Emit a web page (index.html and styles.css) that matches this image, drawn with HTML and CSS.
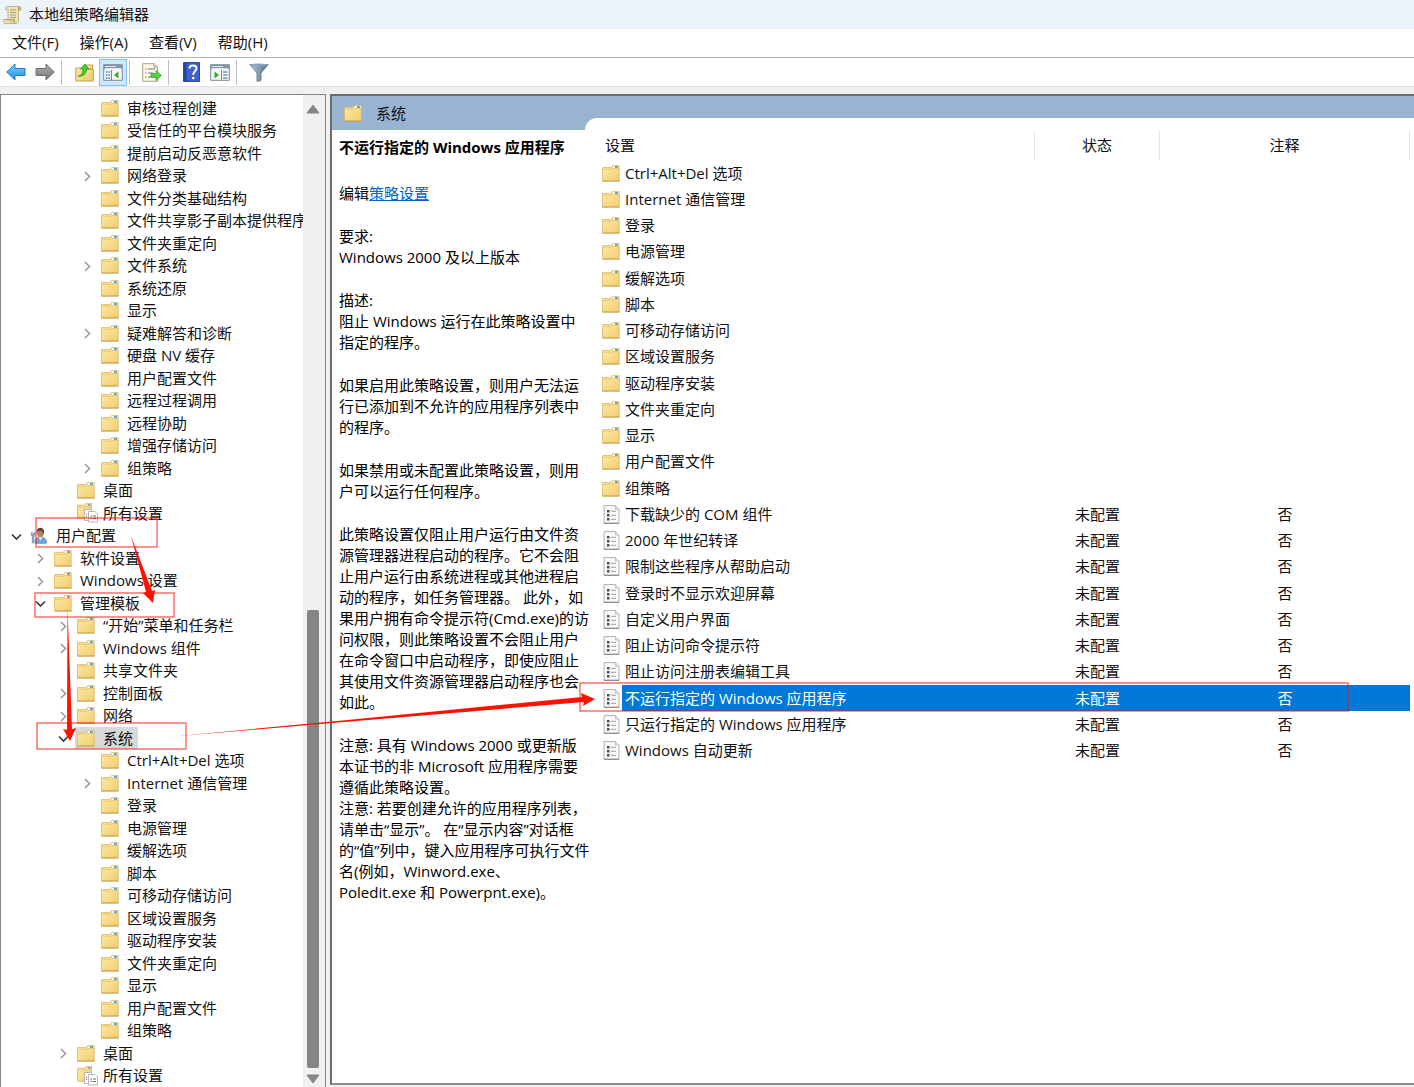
FILE: index.html
```html
<!DOCTYPE html>
<html lang="zh-CN">
<head>
  <meta charset="UTF-8">
  <meta name="viewport" content="width=device-width, initial-scale=1.0">
  <title>本地组策略编辑器</title>
  <link rel="stylesheet" href="styles.css">
</head>
<body>
  <!-- Shared icons -->
  <svg class="sprite" width="0" height="0" aria-hidden="true">
    <defs>
      <linearGradient id="paper" x1="0" y1="0" x2="1" y2="1">
        <stop offset="0" stop-color="#ffebab"/>
        <stop offset="1" stop-color="#f1cc6c"/>
      </linearGradient>
      <linearGradient id="blue" x1="0" y1="0" x2="0" y2="1">
        <stop offset="0" stop-color="#7bd0fa"/>
        <stop offset="1" stop-color="#1590e0"/>
      </linearGradient>
      <linearGradient id="grey" x1="0" y1="0" x2="0" y2="1">
        <stop offset="0" stop-color="#b5b5b5"/>
        <stop offset="1" stop-color="#707070"/>
      </linearGradient>
      <linearGradient id="steel" x1="0" y1="0" x2="1" y2="0">
        <stop offset="0" stop-color="#b9d0e2"/>
        <stop offset="1" stop-color="#4d6a82"/>
      </linearGradient>
    </defs>
    <symbol id="folder" viewBox="0 0 18 17">
      <path d="M.5 2.500h8.300L10.500.600h6.700V15.900H.5z" fill="url(#paper)" stroke="#dbb765" stroke-width=".8"/>
      <path d="M11 1h5.500v2H11z" fill="#fff8e0"/>
      <path d="M13 1h3v2h-3z" fill="#5aa9e2"/>
      <path d="M1 4.300h8l1.500-.8h6.500" fill="none" stroke="#e0bd6c" stroke-width=".7"/>
      <path d="M.3 16.100h17.400" stroke="#c39b4c" stroke-width=".9"/>
    </symbol>
    <symbol id="allset" viewBox="0 0 22 20">
      <path d="M.5 2.200h6.500L8.800.500h5.700v14.700H.5z" fill="url(#paper)" stroke="#dbb765" stroke-width=".8"/>
      <path d="M11 1.200h2.500v1.500H11z" fill="#5aa9e2"/>
      <path d="M1 4h13" stroke="#e0bd6c" stroke-width=".7"/>
      <path d="M7.500 6.500h6l2 2v9h-8z" fill="#fff" stroke="#a5a5a5" stroke-width=".8"/>
      <path d="M11.500 8.500h6.500l2.500 2.500v8h-9z" fill="#fff" stroke="#a5a5a5" stroke-width=".8"/>
      <path d="M9 11h1M9 13.500h1M13.500 13h1.500M16 13h3M13.500 15.500h1.500M16 15.500h3" stroke="#666"/>
    </symbol>
    <symbol id="policy" viewBox="0 0 17 19">
      <path d="M1 .600h11.500l3.500 3.500v14.300H1z" fill="#fafafa" stroke="#b0b0b0"/>
      <path d="M12.500.600v3.500H16" fill="#e3e3e3" stroke="#b8b8b8" stroke-width=".8"/>
      <path d="M1 18.300h15" stroke="#8a8a8a" stroke-width="1.200"/>
      <path d="M4 5h2.500v2.400H4zM4 9h2.500v2.400H4zM4 13h2.500v2.400H4z" fill="#4c4c54"/>
      <path d="M8 6.300h5M8 10.300h5M8 14.300h5" stroke="#9a9ab4"/>
    </symbol>
    <symbol id="closed" viewBox="0 0 16 16">
      <path d="m6 4 4.500 4.500L6 13" fill="none" stroke="#999" stroke-width="1.500"/>
    </symbol>
    <symbol id="open" viewBox="0 0 16 16">
      <path d="m4 6.500 4.500 4.500L13 6.500" fill="none" stroke="#3a3a3a" stroke-width="1.700"/>
    </symbol>
    <symbol id="user" viewBox="0 0 18 18">
      <path d="M1 5.500 3 7l2-1.500v3L3.800 10v7H1.800v-7L.5 8.500z" fill="#8aa4bf" stroke="#6d8aa8" stroke-width=".5"/>
      <path d="M5 17.300c-.6-4.500 1.500-6.600 5.500-6.600 4.600 0 6.600 2.600 6.800 6.300-3.500 1-8.500 1-12.300.3z" fill="#6ea6dc" stroke="#4c82b8" stroke-width=".6"/>
      <path d="m8.500 10.800 2 3.500 2-3.500z" fill="#f3f7fb"/>
      <ellipse cx="10.400" cy="6.200" rx="3.600" ry="4.700" fill="#b68358"/>
      <path d="M6.500 5.500C5.800-.6 15-.8 14.400 5.700L13.300 8c0-2.600-1-3.900-3.300-4-1.600 0-2.500.5-3.500 1.500z" fill="#4e4540"/>
    </symbol>
  </svg>

  <header class="titlebar">
    <svg width="20" height="20" viewBox="0 0 20 20" aria-hidden="true">
      <path d="M5.500 1.500c-2 0-2.500 1.500-1.500 3h2v10H2c-1.500 2-.5 4 1 4h11c2 0 2.500-1.500 2.500-3V5h2c1-2 .2-3.500-1.500-3.500z" fill="#efe2b4" stroke="#b5a67c" stroke-width=".8"/>
      <path d="M16.500 5V3c0-1.500 2-1.500 2 .3L18 5zM2 14.500h10.500c-.5 2 0 4 1.500 4" fill="#d5c28c" stroke="#a5946a" stroke-width=".8"/>
      <path d="M8 5h6M8 7.500h6M8 10h6M8 12.500h6" stroke="#a79f86"/>
    </svg>
    <span>本地组策略编辑器</span>
  </header>

  <nav class="menubar">
    <button type="button">文件(F)</button>
    <button type="button">操作(A)</button>
    <button type="button">查看(V)</button>
    <button type="button">帮助(H)</button>
  </nav>

  <div class="toolbar">
    <button type="button" aria-label="后退">
      <svg width="20" height="18" viewBox="0 0 20 18"><path d="M.7 9 9 1v4.500h10v7H9V17z" fill="url(#blue)" stroke="#2b7db8"/></svg>
    </button>
    <button type="button" aria-label="前进">
      <svg width="20" height="18" viewBox="0 0 20 18"><path d="M19.300 9 11 1v4.500H1v7h10V17z" fill="url(#grey)" stroke="#6f6f6f"/></svg>
    </button>
    <span class="sep"></span>
    <button type="button" aria-label="向上">
      <svg width="19" height="19" viewBox="0 0 19 19">
        <path d="M10 4 11.500 2h6v4H10zM.8 5h9l1 1.500h7.500V18H.8z" fill="url(#paper)" stroke="#c9a04c"/>
        <path d="M3 13c4-1 5-4 5-7H5.500l4.500-5 4 5h-2.500c0 5-3 8-8.500 7z" fill="#48cc30" stroke="#24931c" stroke-width=".7"/>
      </svg>
    </button>
    <button type="button" class="pressed" aria-label="显示/隐藏控制台树">
      <svg width="20" height="17" viewBox="0 0 20 17">
        <path d="M.7.700h18.600v15.600H.7z" fill="#f7f7f7" stroke="#79879a"/>
        <path d="M1 1h18v4H1z" fill="#8494a8"/><path d="M2 2.500h11M2 4.500h16" stroke="#dfe6ef"/>
        <path d="M8.500 6v10" stroke="#79879a"/>
        <path d="M3 8h1.500M3 11h1.500M3 14h1.500M5.500 8H7M5.500 11H7M5.500 14H7" stroke="#477ab8" stroke-width="1.300"/>
        <path d="M15.500 7.500v7L11 11z" fill="#36ad24"/>
      </svg>
    </button>
    <span class="sep"></span>
    <button type="button" aria-label="导出列表">
      <svg width="20" height="19" viewBox="0 0 20 19">
        <path d="M.7.700H12L15.500 4v14.300H.7z" fill="#fdf9e5" stroke="#a7a18b"/>
        <path d="M12 .700V4h3.500" fill="#e0dcc7" stroke="#a7a18b"/>
        <path d="M3 6h1.500M3 10h1.500M3 14h1.500M6 6h7M6 10h5M6 14h5" stroke="#77758a"/>
        <path d="M9 10.500h5V7.500l5.500 5-5.500 5v-3H9z" fill="#56cd45" stroke="#35a52c" stroke-width=".7"/>
      </svg>
    </button>
    <span class="sep"></span>
    <button type="button" aria-label="帮助">
      <svg width="17" height="20" viewBox="0 0 17 20">
        <path d="M.6.600h15.800v18.800H.6z" fill="#3f62cf" stroke="#253b91"/><path d="M1 1h2.500v18H1z" fill="#2744a0"/>
        <path d="M6.500 6.500c0-4 7-4 7 0 0 2.500-3.300 3-3.300 6.500" fill="none" stroke="#fff" stroke-width="2"/>
        <circle cx="10.200" cy="16" r="1.300" fill="#fff"/>
      </svg>
    </button>
    <button type="button" aria-label="显示/隐藏操作窗格">
      <svg width="20" height="17" viewBox="0 0 20 17">
        <path d="M.7.700h18.600v15.600H.7z" fill="#f7f7f7" stroke="#79879a"/>
        <path d="M1 1h18v4H1z" fill="#8494a8"/><path d="M2 2.500h11M2 4.500h16" stroke="#dfe6ef"/>
        <path d="M11.500 6v10" stroke="#79879a"/>
        <path d="M13 8h4.500M13 11h4.500M13 14h4.500" stroke="#7894b5" stroke-width="1.300"/>
        <path d="M4.500 7.500v7L9 11z" fill="#36ad24"/>
      </svg>
    </button>
    <span class="sep"></span>
    <button type="button" aria-label="筛选器">
      <svg width="20" height="19" viewBox="0 0 20 19">
        <path d="M.8 1.500h18.400L12 10v7.500l-4 1V10z" fill="url(#steel)" stroke="#5b7183" stroke-width=".8"/>
        <ellipse cx="10" cy="2" rx="9" ry="1.500" fill="#8ba4b7"/>
      </svg>
    </button>
  </div>

  <main class="workspace">
    <aside class="tree-pane">
      <ul class="tree">
        <li class="l3"><span><svg><use href="#folder"/></svg>审核过程创建</span></li>
        <li class="l3"><span><svg><use href="#folder"/></svg>受信任的平台模块服务</span></li>
        <li class="l3"><span><svg><use href="#folder"/></svg>提前启动反恶意软件</span></li>
        <li class="l3"><svg class="arrow"><use href="#closed"/></svg><span><svg><use href="#folder"/></svg>网络登录</span></li>
        <li class="l3"><span><svg><use href="#folder"/></svg>文件分类基础结构</span></li>
        <li class="l3"><span><svg><use href="#folder"/></svg>文件共享影子副本提供程序</span></li>
        <li class="l3"><span><svg><use href="#folder"/></svg>文件夹重定向</span></li>
        <li class="l3"><svg class="arrow"><use href="#closed"/></svg><span><svg><use href="#folder"/></svg>文件系统</span></li>
        <li class="l3"><span><svg><use href="#folder"/></svg>系统还原</span></li>
        <li class="l3"><span><svg><use href="#folder"/></svg>显示</span></li>
        <li class="l3"><svg class="arrow"><use href="#closed"/></svg><span><svg><use href="#folder"/></svg>疑难解答和诊断</span></li>
        <li class="l3"><span><svg><use href="#folder"/></svg>硬盘 NV 缓存</span></li>
        <li class="l3"><span><svg><use href="#folder"/></svg>用户配置文件</span></li>
        <li class="l3"><span><svg><use href="#folder"/></svg>远程过程调用</span></li>
        <li class="l3"><span><svg><use href="#folder"/></svg>远程协助</span></li>
        <li class="l3"><span><svg><use href="#folder"/></svg>增强存储访问</span></li>
        <li class="l3"><svg class="arrow"><use href="#closed"/></svg><span><svg><use href="#folder"/></svg>组策略</span></li>
        <li class="l2"><span><svg><use href="#folder"/></svg>桌面</span></li>
        <li class="l2"><span><svg class="wide"><use href="#allset"/></svg>所有设置</span></li>
        <li class="l0"><svg class="arrow"><use href="#open"/></svg><span><svg><use href="#user"/></svg>用户配置</span></li>
        <li class="l1"><svg class="arrow"><use href="#closed"/></svg><span><svg><use href="#folder"/></svg>软件设置</span></li>
        <li class="l1"><svg class="arrow"><use href="#closed"/></svg><span><svg><use href="#folder"/></svg>Windows 设置</span></li>
        <li class="l1"><svg class="arrow"><use href="#open"/></svg><span><svg><use href="#folder"/></svg>管理模板</span></li>
        <li class="l2"><svg class="arrow"><use href="#closed"/></svg><span><svg><use href="#folder"/></svg>“开始”菜单和任务栏</span></li>
        <li class="l2"><svg class="arrow"><use href="#closed"/></svg><span><svg><use href="#folder"/></svg>Windows 组件</span></li>
        <li class="l2"><span><svg><use href="#folder"/></svg>共享文件夹</span></li>
        <li class="l2"><svg class="arrow"><use href="#closed"/></svg><span><svg><use href="#folder"/></svg>控制面板</span></li>
        <li class="l2"><svg class="arrow"><use href="#closed"/></svg><span><svg><use href="#folder"/></svg>网络</span></li>
        <li class="l2"><svg class="arrow"><use href="#open"/></svg><span class="current"><svg><use href="#folder"/></svg>系统</span></li>
        <li class="l3"><span><svg><use href="#folder"/></svg>Ctrl+Alt+Del 选项</span></li>
        <li class="l3"><svg class="arrow"><use href="#closed"/></svg><span><svg><use href="#folder"/></svg>Internet 通信管理</span></li>
        <li class="l3"><span><svg><use href="#folder"/></svg>登录</span></li>
        <li class="l3"><span><svg><use href="#folder"/></svg>电源管理</span></li>
        <li class="l3"><span><svg><use href="#folder"/></svg>缓解选项</span></li>
        <li class="l3"><span><svg><use href="#folder"/></svg>脚本</span></li>
        <li class="l3"><span><svg><use href="#folder"/></svg>可移动存储访问</span></li>
        <li class="l3"><span><svg><use href="#folder"/></svg>区域设置服务</span></li>
        <li class="l3"><span><svg><use href="#folder"/></svg>驱动程序安装</span></li>
        <li class="l3"><span><svg><use href="#folder"/></svg>文件夹重定向</span></li>
        <li class="l3"><span><svg><use href="#folder"/></svg>显示</span></li>
        <li class="l3"><span><svg><use href="#folder"/></svg>用户配置文件</span></li>
        <li class="l3"><span><svg><use href="#folder"/></svg>组策略</span></li>
        <li class="l2"><svg class="arrow"><use href="#closed"/></svg><span><svg><use href="#folder"/></svg>桌面</span></li>
        <li class="l2"><span><svg class="wide"><use href="#allset"/></svg>所有设置</span></li>
      </ul>
      <div class="scrollbar">
        <svg width="14" height="10" viewBox="0 0 14 10"><path d="M7 1 13 9H1z" fill="#858585" stroke="#858585" stroke-linejoin="round"/></svg>
        <div class="track"><div class="thumb"></div></div>
        <svg width="14" height="10" viewBox="0 0 14 10"><path d="M7 9 13 1H1z" fill="#858585" stroke="#858585" stroke-linejoin="round"/></svg>
      </div>
    </aside>

    <section class="detail-pane">
      <div class="info">
        <h1><svg width="18" height="17"><use href="#folder"/></svg>系统</h1>
        <div class="description">
          <h2>不运行指定的 Windows 应用程序</h2>
          <p class="edit">编辑<a href="#">策略设置</a></p>
          <p>要求:<br>Windows 2000 及以上版本</p>
          <p>描述:<br>阻止 Windows 运行在此策略设置中<br>指定的程序。</p>
          <p>如果启用此策略设置，则用户无法运<br>行已添加到不允许的应用程序列表中<br>的程序。</p>
          <p>如果禁用或未配置此策略设置，则用<br>户可以运行任何程序。</p>
          <p>此策略设置仅阻止用户运行由文件资<br>源管理器进程启动的程序。它不会阻<br>止用户运行由系统进程或其他进程启<br>动的程序，如任务管理器。 此外，如<br>果用户拥有命令提示符(Cmd.exe)的访<br>问权限，则此策略设置不会阻止用户<br>在命令窗口中启动程序，即使应阻止<br>其使用文件资源管理器启动程序也会<br>如此。</p>
          <p>注意: 具有 Windows 2000 或更新版<br>本证书的非 Microsoft 应用程序需要<br>遵循此策略设置。<br>注意: 若要创建允许的应用程序列表，<br>请单击“显示”。 在“显示内容”对话框<br>的“值”列中，键入应用程序可执行文件<br>名(例如，Winword.exe、<br>Poledit.exe 和 Powerpnt.exe)。</p>
        </div>
      </div>

      <div class="list">
        <table>
          <colgroup><col class="c-icon"><col><col class="c-state"><col class="c-note"></colgroup>
          <thead>
            <tr><th colspan="2">设置</th><th>状态</th><th>注释</th></tr>
          </thead>
          <tbody>
            <tr><td><svg><use href="#folder"/></svg></td><td>Ctrl+Alt+Del 选项</td><td></td><td></td></tr>
            <tr><td><svg><use href="#folder"/></svg></td><td>Internet 通信管理</td><td></td><td></td></tr>
            <tr><td><svg><use href="#folder"/></svg></td><td>登录</td><td></td><td></td></tr>
            <tr><td><svg><use href="#folder"/></svg></td><td>电源管理</td><td></td><td></td></tr>
            <tr><td><svg><use href="#folder"/></svg></td><td>缓解选项</td><td></td><td></td></tr>
            <tr><td><svg><use href="#folder"/></svg></td><td>脚本</td><td></td><td></td></tr>
            <tr><td><svg><use href="#folder"/></svg></td><td>可移动存储访问</td><td></td><td></td></tr>
            <tr><td><svg><use href="#folder"/></svg></td><td>区域设置服务</td><td></td><td></td></tr>
            <tr><td><svg><use href="#folder"/></svg></td><td>驱动程序安装</td><td></td><td></td></tr>
            <tr><td><svg><use href="#folder"/></svg></td><td>文件夹重定向</td><td></td><td></td></tr>
            <tr><td><svg><use href="#folder"/></svg></td><td>显示</td><td></td><td></td></tr>
            <tr><td><svg><use href="#folder"/></svg></td><td>用户配置文件</td><td></td><td></td></tr>
            <tr><td><svg><use href="#folder"/></svg></td><td>组策略</td><td></td><td></td></tr>
            <tr><td><svg class="doc"><use href="#policy"/></svg></td><td>下载缺少的 COM 组件</td><td>未配置</td><td>否</td></tr>
            <tr><td><svg class="doc"><use href="#policy"/></svg></td><td>2000 年世纪转译</td><td>未配置</td><td>否</td></tr>
            <tr><td><svg class="doc"><use href="#policy"/></svg></td><td>限制这些程序从帮助启动</td><td>未配置</td><td>否</td></tr>
            <tr><td><svg class="doc"><use href="#policy"/></svg></td><td>登录时不显示欢迎屏幕</td><td>未配置</td><td>否</td></tr>
            <tr><td><svg class="doc"><use href="#policy"/></svg></td><td>自定义用户界面</td><td>未配置</td><td>否</td></tr>
            <tr><td><svg class="doc"><use href="#policy"/></svg></td><td>阻止访问命令提示符</td><td>未配置</td><td>否</td></tr>
            <tr><td><svg class="doc"><use href="#policy"/></svg></td><td>阻止访问注册表编辑工具</td><td>未配置</td><td>否</td></tr>
            <tr class="selected"><td><svg class="doc"><use href="#policy"/></svg></td><td>不运行指定的 Windows 应用程序</td><td>未配置</td><td>否</td></tr>
            <tr><td><svg class="doc"><use href="#policy"/></svg></td><td>只运行指定的 Windows 应用程序</td><td>未配置</td><td>否</td></tr>
            <tr><td><svg class="doc"><use href="#policy"/></svg></td><td>Windows 自动更新</td><td>未配置</td><td>否</td></tr>
          </tbody>
        </table>
      </div>
    </section>
  </main>

  <!-- Red boxes and arrows showing the path to the policy -->
  <svg class="marks" width="1414" height="1087" viewBox="0 0 1414 1087" aria-hidden="true">
    <g fill="none" stroke="#ff0f00" stroke-opacity=".6" stroke-width="1.500">
      <rect x="36" y="518" width="121" height="29"/>
      <rect x="35" y="593" width="139" height="24"/>
      <rect x="37" y="723" width="149" height="26"/>
      <rect x="580" y="683" width="768" height="28"/>
    </g>
    <g fill="#ff1100">
      <path d="m131 536 21 55 3-1-2 13-10-10 3-1z"/>
      <path d="m67.500 608 4.500 121 4-1-6 13-7-12 4 1z"/>
      <path d="m168 737 164-15.500 250-24.500-1-4 14 6-12 7 1-4-252 21z"/>
    </g>
  </svg>
</body>
</html>
```
FILE: styles.css
```css
* {
  box-sizing: border-box;
}

body {
  margin: 0;
  height: 100vh;
  display: flex;
  flex-direction: column;
  overflow: hidden;
  position: relative;
  background: #f0f0f0;
  color: #111;
  font-family: "Open Sans", "Noto Sans CJK SC", sans-serif;
  font-size: 15px;
  line-height: 21px;
}

button {
  border: 1px solid transparent;
  background: none;
  padding: 0;
  color: inherit;
  font: inherit;
}

.sprite {
  position: absolute;
}

.titlebar {
  display: flex;
  align-items: center;
  gap: 7px;
  height: 29px;
  padding-left: 2px;
  background: #ecf3f9;
}

.menubar {
  display: flex;
  height: 29px;
  padding-left: 2px;
  background: #fff;
  border-bottom: 1px solid #b4b4b4;
}

.menubar button {
  padding: 0 10px 2px 9px;
}

.toolbar {
  display: flex;
  align-items: center;
  gap: 1px;
  height: 29px;
  padding-left: 2px;
  background: #fff;
  border-bottom: 1px solid #e3e3e3;
}

.toolbar button {
  display: flex;
  align-items: center;
  justify-content: center;
  width: 28px;
  height: 27px;
}

.toolbar .pressed {
  background: #cce8ff;
  border-color: #84c2f2;
}

.sep {
  width: 1px;
  height: 25px;
  margin: 0 7px 0 1px;
  background: #bdbdbd;
}

.workspace {
  flex: 1;
  display: flex;
  gap: 4px;
  min-height: 0;
  padding-top: 7px;
}

/* Console tree */
.tree-pane {
  display: flex;
  width: 326px;
  background: #fff;
  border: 1px solid #828790;
  border-bottom: 0;
}

.tree {
  flex: 1;
  min-width: 0;
  margin: 0;
  padding: 2px 0 0 7px;
  overflow: hidden;
  list-style: none;
  white-space: nowrap;
}

.tree li {
  display: flex;
  align-items: center;
  height: 22px;
}

.tree li:nth-child(even) {
  height: 23px;
}

.tree li > span {
  display: flex;
  align-items: center;
  flex: none;
  height: 22px;
  margin-left: 20px;
  padding: 0 5px 0 2px;
}

.tree .arrow + span {
  margin-left: 4px;
}

.tree .arrow {
  flex: none;
  width: 16px;
  height: 16px;
}

.tree span svg {
  width: 18px;
  height: 17px;
  margin-right: 8px;
}

.tree span .wide {
  width: 22px;
  height: 20px;
  margin-right: 4px;
}

.tree .l1 {
  padding-left: 24px;
}

.tree .l2 {
  padding-left: 47px;
}

.tree .l3 {
  padding-left: 71px;
}

.tree .current {
  background: #d9d9d9;
}

.scrollbar {
  display: flex;
  flex-direction: column;
  align-items: center;
  width: 22px;
  padding: 9px 2px 3px 0;
  background: #f0f0f0;
}

.track {
  flex: 1;
  display: flex;
  flex-direction: column;
  justify-content: flex-end;
  padding-bottom: 6px;
}

.thumb {
  width: 12px;
  height: 48%;
  border-radius: 2px;
  background: #858585;
}

/* Result pane */
.detail-pane {
  flex: 1;
  display: grid;
  grid-template-columns: 253px 1fr;
  min-width: 0;
  margin-bottom: 2px;
  background: #99b4d1;
  border: 2px solid #6b6b6b;
  border-right: 0;
  border-bottom-color: #8c8c8c;
}

.info {
  display: flex;
  flex-direction: column;
  z-index: 1;
  white-space: nowrap;
}

.info h1 {
  display: flex;
  align-items: center;
  gap: 14px;
  height: 34px;
  margin: 0;
  padding-left: 12px;
  font-size: 15px;
  font-weight: normal;
}

.description {
  flex: 1;
  padding: 7px 0 0 7px;
  background: #fff;
  color: #000;
}

.description h2 {
  margin: 0;
  font-size: 15px;
  line-height: 21px;
}

.description p {
  margin: 22px 0 0;
}

.description .edit {
  margin-top: 25px;
}

.description a {
  color: #0066cc;
}

.list {
  min-width: 0;
  margin-top: 22px;
  padding: 12px 4px 0 17px;
  background: #fff;
  border-top-left-radius: 12px;
}

table {
  width: 100%;
  table-layout: fixed;
  border-collapse: separate;
  border-spacing: 0;
}

.c-icon {
  width: 20px;
}

.c-state {
  width: 125px;
}

.c-note {
  width: 250px;
}

th,
td {
  padding: 0;
  text-align: center;
  font-weight: normal;
  white-space: nowrap;
}

th {
  height: 30px;
  border-right: 1px solid #e5e5e5;
}

th:first-child,
td:nth-child(2) {
  padding-left: 3px;
  text-align: left;
}

td {
  height: 26px;
}

tr:nth-child(4n) td {
  height: 27px;
}

td svg {
  display: block;
  width: 18px;
  height: 17px;
}

td .doc {
  width: 17px;
  height: 19px;
  margin-left: 1px;
}

.selected td + td {
  background: #0078d7;
  color: #fff;
}

.marks {
  position: absolute;
  z-index: 2;
  top: 0;
  left: 0;
  pointer-events: none;
}
```
